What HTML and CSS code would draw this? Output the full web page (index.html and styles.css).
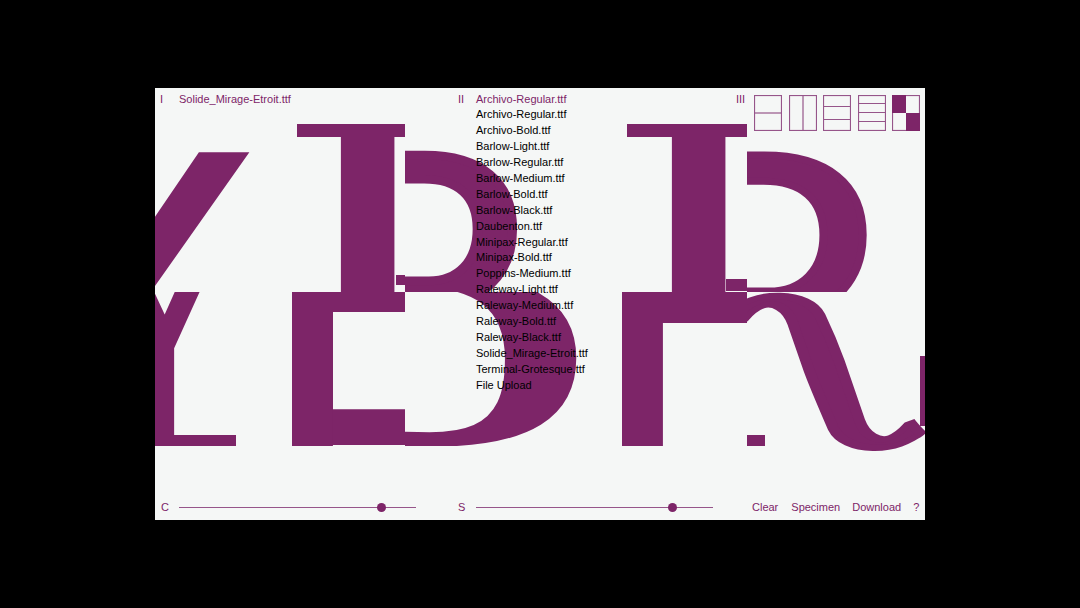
FILE: index.html
```html
<!DOCTYPE html>
<html lang="en">
<head>
<meta charset="utf-8">
<title>Type tool</title>
<link rel="stylesheet" href="styles.css">
</head>
<body>
<main class="stage">
  <div class="poster">
    <div class="slice s-y"><span class="glyph g-y">Y</span></div>
    <div class="slice s-i1"><span class="glyph g-i1">I</span></div>
    <div class="slice s-d1"><span class="glyph g-d1">D</span></div>
    <div class="slice s-i2"><span class="glyph g-i2">I</span><span class="chip c2"></span></div>
    <div class="slice s-r"><span class="glyph g-r">D</span></div>
    <div class="slice s-y2"><span class="glyph g-y2">Y</span></div>
    <div class="slice s-l"><span class="glyph g-l">L</span><span class="glyph g-f1">Γ</span></div>
    <div class="slice s-d2"><span class="glyph g-d2">D</span></div>
    <div class="slice s-f"><span class="glyph g-f2">Γ</span></div>
    <div class="slice s-tail"><span class="glyph g-tail">∫</span></div>
    <span class="chip c1"></span>
    <span class="chip c3"></span>
    <span class="chip c4"></span>
    <span class="chip c5"></span>
  </div>

  <header class="bar top">
    <div class="col one"><span class="num">I</span><span>Solide_Mirage-Etroit.ttf</span></div>
    <div class="col two">
      <span class="num">II</span>
      <div class="picker">
        <span>Archivo-Regular.ttf</span>
        <ul class="menu">
          <li>Archivo-Regular.ttf</li>
          <li>Archivo-Bold.ttf</li>
          <li>Barlow-Light.ttf</li>
          <li>Barlow-Regular.ttf</li>
          <li>Barlow-Medium.ttf</li>
          <li>Barlow-Bold.ttf</li>
          <li>Barlow-Black.ttf</li>
          <li>Daubenton.ttf</li>
          <li>Minipax-Regular.ttf</li>
          <li>Minipax-Bold.ttf</li>
          <li>Poppins-Medium.ttf</li>
          <li>Raleway-Light.ttf</li>
          <li>Raleway-Medium.ttf</li>
          <li>Raleway-Bold.ttf</li>
          <li>Raleway-Black.ttf</li>
          <li>Solide_Mirage-Etroit.ttf</li>
          <li>Terminal-Grotesque.ttf</li>
          <li>File Upload</li>
        </ul>
      </div>
    </div>
    <div class="col three">
      <span class="num">III</span>
      <div class="layouts">
        <svg class="lay" viewBox="0 0 28 36"><rect x=".5" y=".5" width="27" height="35"/><path d="M0 18H28"/></svg>
        <svg class="lay" viewBox="0 0 28 36"><rect x=".5" y=".5" width="27" height="35"/><path d="M14 0V36"/></svg>
        <svg class="lay" viewBox="0 0 28 36"><rect x=".5" y=".5" width="27" height="35"/><path d="M0 11.500H28M0 24.500H28"/></svg>
        <svg class="lay" viewBox="0 0 28 36"><rect x=".5" y=".5" width="27" height="35"/><path d="M0 8.500H28M0 17.500H28M0 26.500H28"/></svg>
        <svg class="lay" viewBox="0 0 28 36"><rect x=".5" y=".5" width="27" height="35"/><path class="fill" d="M0 0H14V18H0ZM14 18H28V36H14Z"/></svg>
      </div>
    </div>
  </header>

  <footer class="bar bottom">
    <div class="col one"><span class="num">C</span><input class="range" type="range" min="0" max="100" step="0.1" value="86.8" aria-label="C"></div>
    <div class="col two"><span class="num">S</span><input class="range" type="range" min="0" max="100" step="0.1" value="84.4" aria-label="S"></div>
    <nav class="actions"><span>Clear</span><span>Specimen</span><span>Download</span><span>?</span></nav>
  </footer>
</main>
</body>
</html>
```
FILE: styles.css
```css
* { box-sizing: border-box; }
html, body { height: 100%; margin: 0; }
body {
  background: #000;
  display: flex;
  align-items: center;
  justify-content: center;
  font-family: "Liberation Sans", Arial, sans-serif;
  font-size: 11px;
  color: #7d2568;
}
.stage {
  position: relative;
  width: 770px;
  height: 432px;
  background: #f5f7f6;
  overflow: hidden;
  display: flex;
  flex-direction: column;
  justify-content: space-between;
}
.bar { position: relative; display: flex; }
.top { height: 44px; padding: 3px 5px 0 5px; line-height: 16px; }
.bottom { height: 24px; padding: 3px 5px 0 6px; line-height: 16px; align-items: flex-start; }
.col { display: flex; }
.one { width: 298px; }
.two { width: 278px; }
.bottom .one { width: 297px; }
.bottom .two { width: 277px; }
.num { width: 19px; flex: none; }
.two .num { width: 18px; }
.bottom .one .num { width: 18px; }
.picker { position: relative; }
.menu {
  position: absolute;
  left: 0;
  top: 16.300px;
  margin: 0;
  padding: 0;
  list-style: none;
  color: #000;
  white-space: nowrap;
  line-height: 15.900px;
}
.three .num { width: 18px; }
.layouts { display: flex; gap: 6.500px; margin-top: 4px; }
.lay { width: 28px; height: 36px; flex: none; }
.lay rect, .lay path { fill: none; stroke: #96558a; stroke-width: 1.200; }
.lay path.fill { fill: #7d2568; stroke: none; }
.range {
  -webkit-appearance: none;
  appearance: none;
  width: 237px;
  height: 16px;
  margin: 0;
  background: transparent;
}
.range::-webkit-slider-runnable-track { height: 1px; background: #96558a; }
.range::-webkit-slider-thumb {
  -webkit-appearance: none;
  width: 9px;
  height: 9px;
  margin-top: -4px;
  border-radius: 50%;
  background: #7d2568;
}
.actions { display: flex; gap: 12px; margin-left: 18px; }
.actions span:first-child { margin-right: 1px; margin-left: -1px; }

/* Sliced display lettering */
.poster { position: absolute; inset: 0; }
.slice { position: absolute; overflow: hidden; }
.glyph {
  position: absolute;
  font-size: 200px;
  line-height: 1;
  transform-origin: 0 0;
  white-space: nowrap;
}
.s-y { left: 0; top: 36px; width: 142px; height: 168px; }
.g-y { left: -223px; top: -44.400px; transform: scale(2.46, 2.3); }
.s-i1 { left: 142px; top: 36px; width: 108px; height: 168px; }
.g-i1 { left: -36px; top: -30px; font-family: "DejaVu Serif", serif; transform: scale(2.7, 1.28); }
.s-d1 { left: 250px; top: 36px; width: 217px; height: 168px; }
.g-d1 { left: -56px; top: -2px; font-weight: 700; -webkit-text-stroke: 8px #7d2568; transform: scale(1.2, 1.085); }
.s-i2 { left: 472px; top: 36px; width: 120px; height: 168px; }
.g-i2 { left: -35px; top: -30px; font-family: "DejaVu Serif", serif; transform: scale(2.7, 1.28); }
.s-r { left: 592px; top: 36px; width: 178px; height: 168px; }
.g-r { left: -68px; top: -5.800px; font-weight: 700; -webkit-text-stroke: 6px #7d2568; transform: scale(1.35, 1.18); }
.s-y2 { left: 0; top: 204px; width: 137px; height: 143px; }
.g-y2 { left: -165px; top: -290px; font-family: "Liberation Serif", serif; transform: scale(2.25, 3); }
.s-l { left: 137px; top: 204px; width: 113px; height: 154px; }
.g-l { left: -19px; top: -118.600px; font-weight: 700; transform: scale(1.42, 1.61); }
.g-f1 { left: -19px; top: -56.600px; font-weight: 700; transform: scale(1.42, 1.433); }
.s-d2 { left: 250px; top: 204px; width: 217px; height: 154px; }
.g-d2 { left: -125.500px; top: -68.500px; font-family: "Liberation Serif", serif; font-weight: 700; transform: scale(2.2, 1.33); }
.s-f { left: 467px; top: 204px; width: 125px; height: 154px; }
.g-f2 { left: -19px; top: -45.600px; font-weight: 700; transform: scale(1.42, 1.433); }
.s-tail { left: 592px; top: 204px; width: 178px; height: 178px; }
.g-tail { left: 85px; top: -46px; font-family: "Liberation Serif", serif; -webkit-text-stroke: 6px #7d2568; transform: rotate(-20deg) scale(-1.8, 0.95); }
.chip { position: absolute; z-index: 1; background: #7d2568; }
.c1 { left: 241px; top: 187px; width: 9px; height: 10px; }
.c2 { left: 99px; top: 155px; width: 21px; height: 12px; }
.c3 { left: 592px; top: 347px; width: 18px; height: 11px; }
.c4 { left: 765px; top: 268px; width: 5px; height: 70px; }
.c5 { left: 0; top: 347px; width: 81px; height: 11px; }
```
